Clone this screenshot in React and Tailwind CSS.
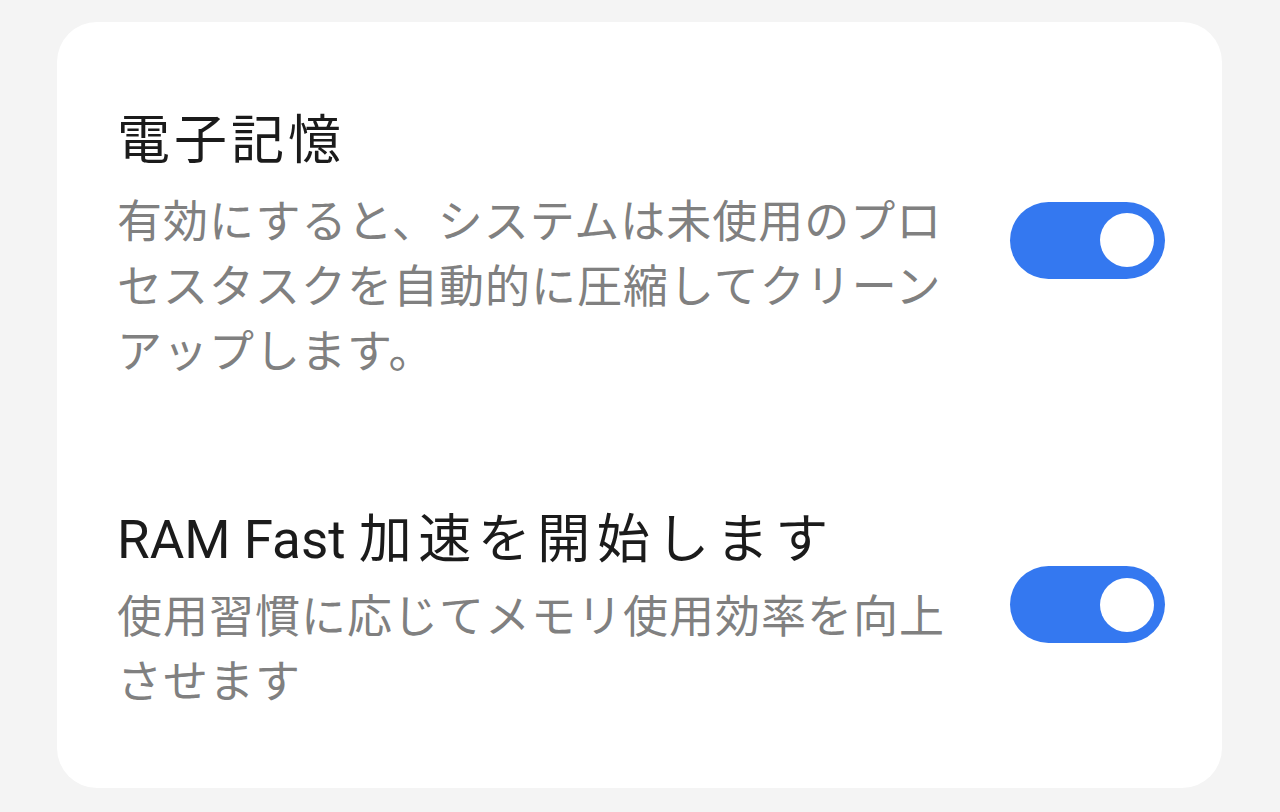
import React from 'react'

const FONT = { fontFamily: 'Roboto, "Noto Sans CJK JP", sans-serif' }

function Toggle() {
  return (
    <div className="mb-[14px] flex h-[77px] w-[155px] shrink-0 items-center justify-end rounded-full bg-[#3478f0] pr-[11px]">
      <div className="h-[54px] w-[54px] rounded-full bg-white" />
    </div>
  )
}

function SettingRow({ title, lines, gap }) {
  return (
    <div className="flex items-center justify-between">
      <div className="w-[850px]">
        <p className="text-[53px] leading-[64px] text-[#1b1b1b]">{title}</p>
        <p
          className="text-[45px] leading-[65px] tracking-[1px] text-[#808080]"
          style={{ marginTop: gap }}
        >
          {lines.map((line, i) => (
            <span key={i} className="block whitespace-nowrap">
              {line}
            </span>
          ))}
        </p>
      </div>
      <Toggle />
    </div>
  )
}

export default function App() {
  return (
    <div className="min-h-screen bg-[#f4f4f4] pb-[24px] pl-[57px] pr-[58px] pt-[22px]" style={FONT}>
      <div className="rounded-[40px] bg-white pb-[73px] pl-[60px] pr-[57px] pt-[87px]">
        <SettingRow
          title={<span className="tracking-[4px]">電子記憶</span>}
          lines={[
            '有効にすると、システムは未使用のプロ',
            'セスタスクを自動的に圧縮してクリーン',
            'アップします。',
          ]}
          gap={17}
        />
        <div className="h-[123px]" />
        <SettingRow
          title={
            <>
              RAM Fast <span className="tracking-[6.5px]">加速を開始します</span>
            </>
          }
          lines={['使用習慣に応じてメモリ使用効率を向上', 'させます']}
          gap={13}
        />
      </div>
    </div>
  )
}
